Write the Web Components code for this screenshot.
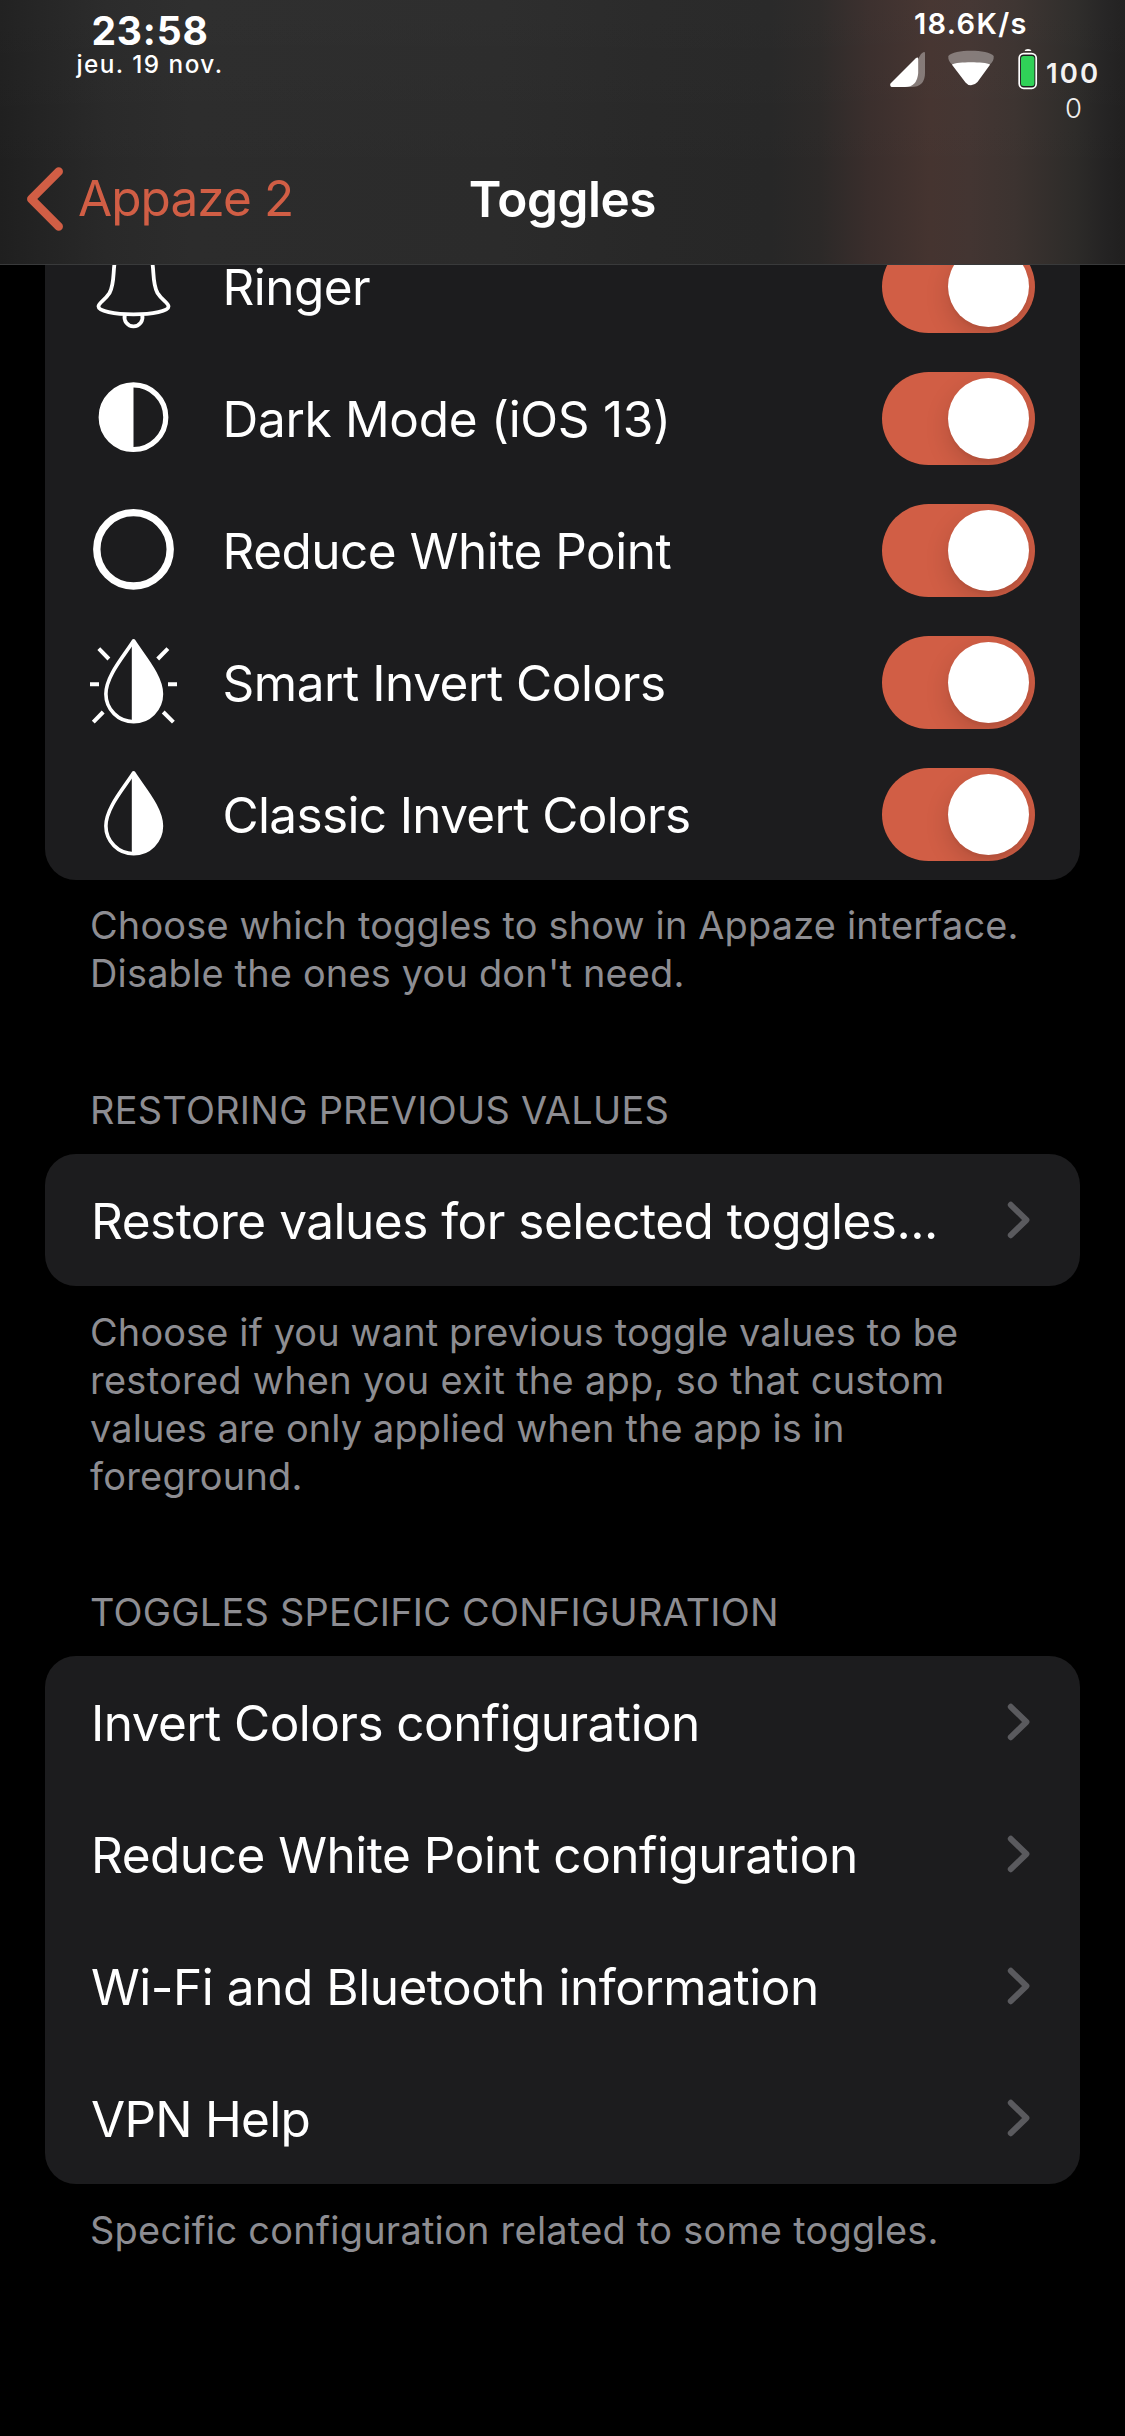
<!DOCTYPE html>
<html lang="en">
<head>
<meta charset="utf-8">
<title>Toggles</title>
<style>
  html, body { margin: 0; background: #000; }
  body { width: 1125px; height: 2436px; overflow: hidden; font-family: Inter, "Liberation Sans", sans-serif; color: #fff; }
</style>
</head>
<body>
<settings-screen></settings-screen>

<template id="t-screen">
  <style>
    :host { display: flex; flex-direction: column; width: 1125px; height: 2436px; background: #000; overflow: hidden; }
    main { flex: 1; min-height: 0; overflow: hidden; padding: 0 45px; }
    .scrolled { margin-top: -45px; }
    .lead { --foot-top: 21px; --foot-bottom: 1px; }
  </style>
  <nav-header></nav-header>
  <main>
    <div class="scrolled">
      <list-section class="lead">
        <toggle-row icon="bell" fit="143.6">Ringer</toggle-row>
        <toggle-row icon="half" fit="439.5">Dark Mode (iOS 13)</toggle-row>
        <toggle-row icon="ring" fit="445">Reduce White Point</toggle-row>
        <toggle-row icon="smart" fit="439.5">Smart Invert Colors</toggle-row>
        <toggle-row icon="drop" fit="464.5">Classic Invert Colors</toggle-row>
        <fit-text slot="footer" fit="923.5">Choose which toggles to show in Appaze interface.</fit-text>
        <fit-text slot="footer" fit="588.5">Disable the ones you don't need.</fit-text>
      </list-section>
      <list-section>
        <fit-text slot="header" fit="574.5">RESTORING PREVIOUS VALUES</fit-text>
        <link-row fit="840">Restore values for selected toggles...</link-row>
        <fit-text slot="footer" fit="865">Choose if you want previous toggle values to be</fit-text>
        <fit-text slot="footer" fit="850">restored when you exit the app, so that custom</fit-text>
        <fit-text slot="footer" fit="752">values are only applied when the app is in</fit-text>
        <fit-text slot="footer" fit="209.5">foreground.</fit-text>
      </list-section>
      <list-section>
        <fit-text slot="header" fit="685">TOGGLES SPECIFIC CONFIGURATION</fit-text>
        <link-row fit="602">Invert Colors configuration</link-row>
        <link-row fit="760">Reduce White Point configuration</link-row>
        <link-row fit="724">Wi-Fi and Bluetooth information</link-row>
        <link-row fit="216.5">VPN Help</link-row>
        <fit-text slot="footer" fit="843.5">Specific configuration related to some toggles.</fit-text>
      </list-section>
    </div>
  </main>
</template>

<template id="t-header">
  <style>
    :host { display: flex; flex-direction: column; flex: none; height: 264px; border-bottom: 1px solid #393a3b;
      background:
        linear-gradient(180deg, rgba(255,255,255,.016), rgba(255,255,255,0) 70%),
        linear-gradient(90deg, #1f1f1f 0, #232323 40px, #292929 105px, #2c2c2c 190px, #2b2b2b 500px, #282828 650px, #272727 770px, #2c2928 820px, #3a2e2c 870px, #453430 930px, #433532 970px, #3c3330 1015px, #2d2b29 1075px, #242323 1105px, #201f1f 1125px); }
    .status { display: flex; justify-content: space-between; height: 142px; }
    .clock { width: 300px; display: flex; flex-direction: column; align-items: center; padding-top: 10px; }
    .time { font-size: 39px; font-weight: 700; line-height: 41px; }
    .date { font-size: 24.3px; font-weight: 550; line-height: 26px; }
    .right { width: 235px; padding-top: 7px; display: flex; flex-direction: column; }
    .speed { font-size: 29px; font-weight: 600; line-height: 34px; padding-left: 24px; }
    .icons { display: flex; align-items: flex-start; height: 50px; margin-top: -1px; }
    svg { display: block; flex: none; }
    .pct { font-size: 27.5px; font-weight: 600; line-height: 34px; color: #f4f2f2; margin: 16px 0 0 8px; }
    .zero { font-size: 27.5px; font-weight: 300; line-height: 34px; color: #f0efee; padding: 1px 0 0 175px; }
    .bar { display: grid; grid-template-columns: 1fr auto 1fr; align-items: center; height: 114px; font-size: 49.5px; line-height: 60px; }
    .back { display: flex; align-items: center; color: #d15e45; padding-left: 24px; }
    .back fit-text { margin-left: 12px; padding-bottom: 2px; }
    .title { font-weight: 600; }
  </style>
  <div class="status">
    <div class="clock">
      <fit-text class="time" fit="113">23:58</fit-text>
      <fit-text class="date" fit="145.5">jeu. 19 nov.</fit-text>
    </div>
    <div class="right">
      <fit-text class="speed" fit="110.5">18.6K/s</fit-text>
      <div class="icons">
        <svg width="35" height="48" viewBox="0 0 35 48">
          <path fill="#fff" fill-opacity=".35" d="M35 13.500V33Q35 47 21 47H14L28 19L31 14Q35 10.500 35 13.500Z"/>
          <path fill="#fff" d="M28.200 19V33Q27 47 15 47H1.500Q-.5 46 .5 43.500L25.500 18.500Q28.200 16.500 28.200 19Z"/>
        </svg>
        <svg width="46" height="48" viewBox="0 0 46 48" style="margin-left:23px">
          <path fill="#fff" fill-opacity=".35" d="M.3 16C3 12.500 13 10.700 23 10.700S43 12.500 45.700 16C46 20 44.500 22 42.300 24.300H3.700C1.500 22 0 20 .3 16Z"/>
          <path fill="#fff" d="M3.800 24.500C10 21.600 36 21.600 42.200 24.500L29.500 42Q26.500 45.300 23 45.300T17.500 42.600Z"/>
        </svg>
        <svg width="20" height="50" viewBox="0 0 20 50" style="margin-left:24px">
          <path fill="#fff" d="M6.500 11Q7 9 10 9T13.500 11Z"/>
          <rect x="1.200" y="13.600" width="17" height="34.700" rx="4.500" fill="#1d1d1d" stroke="#fff" stroke-width="1.700"/>
          <rect x="3" y="16" width="13.400" height="30" rx="2.500" fill="#30d158"/>
        </svg>
        <fit-text class="pct" fit="50">100</fit-text>
      </div>
      <fit-text class="zero">0</fit-text>
    </div>
  </div>
  <div class="bar">
    <div class="back">
      <svg width="42" height="66" viewBox="0 0 42 66" fill="none" stroke="currentColor" stroke-width="8.500" stroke-linecap="round" stroke-linejoin="round"><path d="M34.700 5.500L7.300 33L34.700 60.500"/></svg>
      <fit-text fit="212">Appaze 2</fit-text>
    </div>
    <fit-text class="title" fit="184.5">Toggles</fit-text>
    <span></span>
  </div>
</template>

<template id="t-section">
  <style>
    :host { display: block; }
    .card { background: #1c1c1e; border-radius: 31px; overflow: hidden; }
    .head, .foot { color: #8d8d92; font-size: 37.9px; line-height: 48px; padding: 0 45px; white-space: nowrap; }
    .head { display: none; height: 136px; padding-bottom: 20px; flex-direction: column; justify-content: flex-end; }
    .head.on { display: flex; }
    .foot { padding-top: var(--foot-top, 22px); padding-bottom: var(--foot-bottom, 0); display: flex; flex-direction: column; }
  </style>
  <div class="head"><slot name="header"></slot></div>
  <div class="card"><slot></slot></div>
  <div class="foot"><slot name="footer"></slot></div>
</template>

<template id="t-toggle-row">
  <style>
    :host { display: flex; align-items: center; height: 132px; box-sizing: border-box; padding: 0 45px; font-size: 49.5px; }
    .icon { width: 87px; height: 87px; flex: none; margin: 0 45.5px 1.500px 0; }
    svg { display: block; width: 87px; height: 87px; overflow: visible; }
    fit-text { flex: 1; padding-top: 2px; line-height: 60px; }
  </style>
  <div class="icon"></div>
  <fit-text></fit-text>
  <ui-switch></ui-switch>
</template>

<template id="t-switch">
  <style>
    :host { display: flex; justify-content: flex-end; box-sizing: border-box; flex: none; width: 153px; height: 93px; padding: 6px; border-radius: 47px; background: #d15e45; overflow: hidden; margin-top: 1px; }
    i { width: 81px; height: 81px; border-radius: 50%; background: #fff; box-shadow: 0 9px 24px rgba(0,0,0,.15), 0 3px 3px rgba(0,0,0,.04); }
  </style>
  <i></i>
</template>

<template id="t-link-row">
  <style>
    :host { display: flex; align-items: center; justify-content: space-between; height: 132px; box-sizing: border-box; padding: 0 47px 0 46px; font-size: 49.5px; }
    fit-text { padding-top: 2px; line-height: 60px; }
    svg { display: block; flex: none; }
  </style>
  <fit-text></fit-text>
  <svg width="26" height="40" viewBox="0 0 26 40" fill="none" stroke="#5a5a5e" stroke-width="6" stroke-linecap="round" stroke-linejoin="round"><path d="M3.800 4.800L19.400 20L3.800 35.200"/></svg>
</template>

<script>
  const stamp = (el, id) => {
    const root = el.attachShadow({ mode: 'open' });
    root.append(document.getElementById(id).content.cloneNode(true));
    return root;
  };

  const DROP = `<path d="M43.600 2.800C34 18 15.900 38 15.900 56A27.700 27.700 0 0 0 71.400 56C71.400 38 53.200 18 43.600 2.800Z" fill="none" stroke="#fff" stroke-width="3.600" stroke-linejoin="round"/>
    <path d="M41.800 3L43.600 2.800C53.200 18 71.400 38 71.400 56A27.700 27.700 0 0 1 41.800 83.500Z" fill="#fff"/>`;
  const ICONS = {
    bell: `<g fill="none" stroke="#fff" stroke-width="3.800"><path d="M43.500 4.500C32 4.500 26 14 24.500 22C23 30 24.500 42 19.500 51C14.500 59 8.500 60.500 8.500 64.500C8.500 69 24 72.300 43.500 72.300S78.500 69 78.500 64.500C78.500 60.500 72.500 59 67.500 51C62.500 42 64 30 62.500 22C61 14 55 4.500 43.500 4.500Z"/><path d="M34.800 73A9 9 0 1 0 52.200 73"/></g>`,
    half: `<circle cx="43.500" cy="43.200" r="32.300" fill="none" stroke="#fff" stroke-width="5.200"/><path d="M43.500 9A34.300 34.300 0 0 0 43.500 77.500Z" fill="#fff"/>`,
    ring: `<circle cx="43.500" cy="43.300" r="36.700" fill="none" stroke="#fff" stroke-width="7.400"/>`,
    drop: DROP,
    smart: DROP + `<path d="M0 46.200H9M78 46.200H87M8.800 10.600L18.900 21M77.900 10.600L67.700 21M3.300 84.200L13.200 74M83.400 84.200L73.200 74" stroke="#fff" stroke-width="4"/>`
  };

  // Single-line text whose tracking is tuned so that the glyphs span `fit` pixels.
  const ctx = document.createElement('canvas').getContext('2d');
  class FitText extends HTMLElement {
    constructor() {
      super();
      this.attachShadow({ mode: 'open' }).innerHTML =
        '<style>:host{display:block;white-space:nowrap;font-optical-sizing:none}</style><slot></slot>';
    }
    connectedCallback() {
      const target = parseFloat(this.getAttribute('fit'));
      const text = this.textContent.trim();
      if (!target || text.length < 2) return;
      const cs = getComputedStyle(this);
      ctx.font = `${cs.fontWeight} ${cs.fontSize} ${cs.fontFamily}`;
      const m = ctx.measureText(text);
      const ink = m.actualBoundingBoxLeft + m.actualBoundingBoxRight;
      this.style.letterSpacing = ((target - ink) / (text.length - 1)).toFixed(3) + 'px';
    }
  }

  class UiSwitch extends HTMLElement {
    constructor() { super(); stamp(this, 't-switch'); }
  }

  class LinkRow extends HTMLElement {
    connectedCallback() {
      if (this.shadowRoot) return;
      const label = stamp(this, 't-link-row').querySelector('fit-text');
      label.setAttribute('fit', this.getAttribute('fit'));
      label.textContent = this.textContent;
      label.connectedCallback();
    }
  }

  class ToggleRow extends HTMLElement {
    connectedCallback() {
      if (this.shadowRoot) return;
      const root = stamp(this, 't-toggle-row');
      root.querySelector('.icon').innerHTML = `<svg viewBox="0 0 87 87">${ICONS[this.getAttribute('icon')]}</svg>`;
      const label = root.querySelector('fit-text');
      label.setAttribute('fit', this.getAttribute('fit'));
      label.textContent = this.textContent;
      label.connectedCallback();
    }
  }

  class ListSection extends HTMLElement {
    connectedCallback() {
      if (this.shadowRoot) return;
      const root = stamp(this, 't-section');
      if (this.querySelector('[slot=header]')) root.querySelector('.head').classList.add('on');
    }
  }

  class NavHeader extends HTMLElement {
    constructor() { super(); stamp(this, 't-header'); }
  }

  class SettingsScreen extends HTMLElement {
    constructor() { super(); stamp(this, 't-screen'); }
  }

  customElements.define('ui-switch', UiSwitch);
  customElements.define('list-section', ListSection);
  customElements.define('nav-header', NavHeader);
  customElements.define('settings-screen', SettingsScreen);
  customElements.define('fit-text', FitText);
  customElements.define('link-row', LinkRow);
  customElements.define('toggle-row', ToggleRow);
</script>
</body>
</html>
